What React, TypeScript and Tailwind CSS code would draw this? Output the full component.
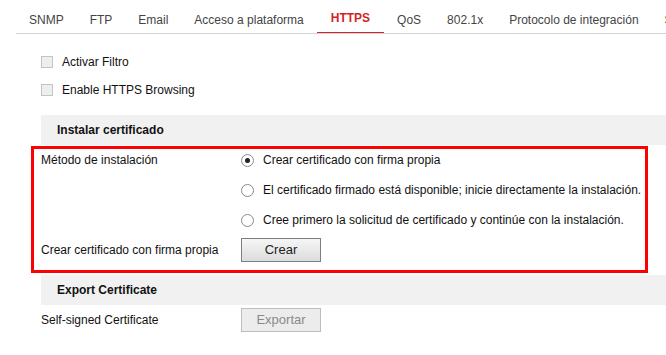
import { useState } from "react";

const tabs = ["SNMP", "FTP", "Email", "Acceso a plataforma", "HTTPS", "QoS", "802.1x", "Protocolo de integración", "Servicio"];

const methods = [
  "Crear certificado con firma propia",
  "El certificado firmado está disponible; inicie directamente la instalación.",
  "Cree primero la solicitud de certificado y continúe con la instalación.",
];

const Checkbox = ({ label }: { label: string }) => (
  <label className="flex h-[28px] items-center gap-[9px]">
    <span className="h-[12px] w-[12px] border border-[#c4c4c4] bg-[#eeeeee]" />
    <span>{label}</span>
  </label>
);

const Radio = ({ checked, label, onClick }: { checked: boolean; label: string; onClick: () => void }) => (
  <button type="button" onClick={onClick} className="flex items-center gap-[9px] text-left">
    <span className="flex h-[13px] w-[13px] items-center justify-center rounded-full border border-[#8a8a8a] bg-white">
      {checked && <span className="h-[5px] w-[5px] rounded-full bg-[#222]" />}
    </span>
    <span>{label}</span>
  </button>
);

const SectionHeader = ({ title }: { title: string }) => (
  <div className="flex h-[30px] items-center bg-[#f1f1f1] pl-[16px] font-bold">{title}</div>
);

export default function App() {
  const [method, setMethod] = useState(0);

  return (
    <div
      className="h-[355px] w-[666px] overflow-hidden bg-white text-[12px] text-[#111]"
      style={{ fontFamily: '"Liberation Sans", Arial, sans-serif' }}
    >
      {/* tabs */}
      <div className="ml-[16px] flex h-[34px] overflow-hidden whitespace-nowrap border-b border-[#d3d3d3]">
        {tabs.map((t) =>
          t === "HTTPS" ? (
            <div key={t} className="-mb-px flex shrink-0 items-center border-b-2 border-[#d2232a] px-[14px] pb-[1px] pt-[5px] font-bold text-[#d2232a]">
              {t}
            </div>
          ) : (
            <div key={t} className="flex shrink-0 items-center px-[13px] pt-[7px] text-[#444]">
              {t}
            </div>
          )
        )}
      </div>

      <div className="pl-[41px]">
        <div className="mt-[14px]">
          <Checkbox label="Activar Filtro" />
          <Checkbox label="Enable HTTPS Browsing" />
        </div>

        <div className="mt-[11px]">
          <SectionHeader title="Instalar certificado" />
        </div>

        <div className="relative">
          <div className="grid grid-cols-[200px_1fr]">
            <div className="flex h-[30px] items-center">Método de instalación</div>
            <div className="flex h-[30px] items-center">
              <Radio checked={method === 0} label={methods[0]} onClick={() => setMethod(0)} />
            </div>
            <div />
            <div className="flex h-[30px] items-center">
              <Radio checked={method === 1} label={methods[1]} onClick={() => setMethod(1)} />
            </div>
            <div />
            <div className="flex h-[30px] items-center">
              <Radio checked={method === 2} label={methods[2]} onClick={() => setMethod(2)} />
            </div>
            <div className="flex h-[30px] items-center">Crear certificado con firma propia</div>
            <div className="flex h-[30px] items-center">
              <button
                type="button"
                className="h-[24px] w-[80px] border border-[#7d7d7d] bg-gradient-to-b from-[#f6f6f6] to-[#dcdcdc] text-[13px] text-[#222]"
              >
                Crear
              </button>
            </div>
          </div>
          {/* red annotation frame */}
          <div className="pointer-events-none absolute left-[-10px] top-[1px] h-[127px] w-[617px] border-[3px] border-[#ff0000]" />
        </div>

        <div className="mt-[10px]">
          <SectionHeader title="Export Certificate" />
        </div>

        <div className="grid grid-cols-[200px_1fr]">
          <div className="flex h-[30px] items-center">Self-signed Certificate</div>
          <div className="flex h-[30px] items-center">
            <button
              type="button"
              disabled
              className="h-[24px] w-[80px] border border-[#bdbdbd] bg-[#ececec] text-[13px] text-[#8a8a8a]"
            >
              Exportar
            </button>
          </div>
        </div>
      </div>
    </div>
  );
}
